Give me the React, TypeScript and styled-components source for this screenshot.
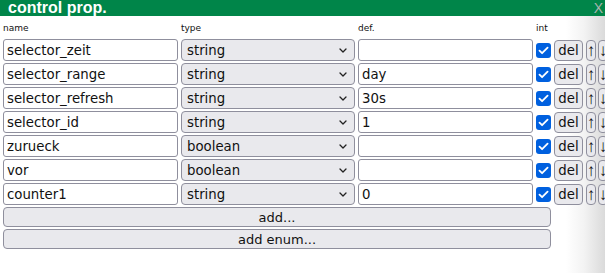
import styled, { createGlobalStyle } from 'styled-components';

type TProp = {
  name: string;
  type: string;
  def: string;
};

const PROPS: TProp[] = [
  { name: 'selector_zeit', type: 'string', def: '' },
  { name: 'selector_range', type: 'string', def: 'day' },
  { name: 'selector_refresh', type: 'string', def: '30s' },
  { name: 'selector_id', type: 'string', def: '1' },
  { name: 'zurueck', type: 'boolean', def: '' },
  { name: 'vor', type: 'boolean', def: '' },
  { name: 'counter1', type: 'string', def: '0' },
];

const GlobalStyle = createGlobalStyle`
  html, body {
    margin: 0;
    padding: 0;
    background: #fff;
    overflow: hidden;
  }
  body {
    font-family: "DejaVu Sans", Verdana, sans-serif;
  }
`;

const App = () => (
  <Panel>
    <GlobalStyle />
    <Header>
      <Title>control prop.</Title>
      <Close>X</Close>
    </Header>

    <Body>
      <Grid>
        <Label>name</Label>
        <Label>type</Label>
        <Label>def.</Label>
        <Label>int</Label>
        <span />
        <span />
        <span />

        {PROPS.map(prop => (
          <Row key={prop.name}>
            <TextField defaultValue={prop.name} />
            <SelectWrap>
              <Select defaultValue={prop.type}>
                <option value="string">string</option>
                <option value="boolean">boolean</option>
                <option value="number">number</option>
              </Select>
              <svg width="8" height="5" viewBox="0 0 8 5" fill="none">
                <path d="M1 1l3 3 3-3" stroke="#222" strokeWidth="1.3" strokeLinecap="round" strokeLinejoin="round" />
              </svg>
            </SelectWrap>
            <TextField defaultValue={prop.def} />
            <Check>
              <svg width="11" height="9" viewBox="0 0 11 9" fill="none">
                <path d="M1.5 4.6l2.6 2.6L9.6 1.6" stroke="#fff" strokeWidth="1.8" strokeLinecap="round" strokeLinejoin="round" />
              </svg>
            </Check>
            <Button>del</Button>
            <ArrowButton>↑</ArrowButton>
            <ArrowButton>↓</ArrowButton>
          </Row>
        ))}
      </Grid>

      <Actions>
        <WideButton>add...</WideButton>
        <WideButton>add enum...</WideButton>
      </Actions>
    </Body>
  </Panel>
);

const Panel = styled.div`
  width: 605px;
  height: 273px;
  overflow: hidden;
`;

const Header = styled.div`
  height: 16px;
  background: #008549;
  display: flex;
  align-items: center;
  justify-content: space-between;
  padding: 0 2px 0 8px;
  overflow: hidden;
`;

const Title = styled.span`
  font-family: "Liberation Sans", Arial, sans-serif;
  font-weight: bold;
  font-size: 16px;
  line-height: 16px;
  color: #fff;
  margin-top: -1px;
`;

const Close = styled.span`
  font-family: "Liberation Sans", Arial, sans-serif;
  font-size: 14px;
  line-height: 16px;
  color: #a9b4ae;
`;

const Body = styled.div`
  height: 257px;
  padding: 0 0 0 3px;
  background: linear-gradient(to right, #fff 0, #fff 566px, #f3f3f3 584px, #dadada 605px);
`;

const Grid = styled.div`
  display: grid;
  grid-template-columns: 175px 174px 175px 15px 29px 9px 9px;
  column-gap: 3px;
  row-gap: 2px;
  grid-template-rows: 21px;
  grid-auto-rows: 22px;
  align-items: center;
  width: 602px;
`;

const Row = styled.div`
  display: contents;
`;

const Label = styled.span`
  font-size: 9px;
  color: #111;
  align-self: center;
  padding-top: 3px;
`;

const TextField = styled.input`
  box-sizing: border-box;
  width: 100%;
  height: 22px;
  margin: 0;
  padding: 0 3px;
  border: 1px solid #8f8f9d;
  border-radius: 3px;
  background: #fff;
  font-family: "DejaVu Sans", Verdana, sans-serif;
  font-size: 13.3px;
  color: #111;
  outline: none;
`;

const SelectWrap = styled.div`
  position: relative;
  height: 22px;

  svg {
    position: absolute;
    right: 8px;
    top: 9px;
    pointer-events: none;
  }
`;

const Select = styled.select`
  appearance: none;
  box-sizing: border-box;
  width: 100%;
  height: 22px;
  margin: 0;
  padding: 0 0 0 5px;
  border: 1px solid #8f8f9d;
  border-radius: 4px;
  background: #e9e9ed;
  font-family: "DejaVu Sans", Verdana, sans-serif;
  font-size: 13.3px;
  color: #111;
  outline: none;
`;

const Check = styled.span`
  width: 15px;
  height: 15px;
  border-radius: 3px;
  background: #0060df;
  display: flex;
  align-items: center;
  justify-content: center;
`;

const Button = styled.button`
  box-sizing: border-box;
  width: 100%;
  height: 21px;
  margin: 0;
  padding: 0;
  border: 1px solid #8f8f9d;
  border-radius: 4px;
  background: #e9e9ed;
  font-family: "DejaVu Sans", Verdana, sans-serif;
  font-size: 13.3px;
  color: #111;
`;

const ArrowButton = styled(Button)`
  width: 10px;
  display: flex;
  align-items: center;
  justify-content: center;
  font-family: "Liberation Sans", Arial, sans-serif;
  font-size: 17px;
  line-height: 1;
  overflow: hidden;
`;

const Actions = styled.div`
  display: flex;
  flex-direction: column;
  gap: 2px;
  width: 548px;
  margin-top: 2px;
`;

const WideButton = styled(Button)`
  height: 20px;
  font-size: 13px;
`;

export default App;
